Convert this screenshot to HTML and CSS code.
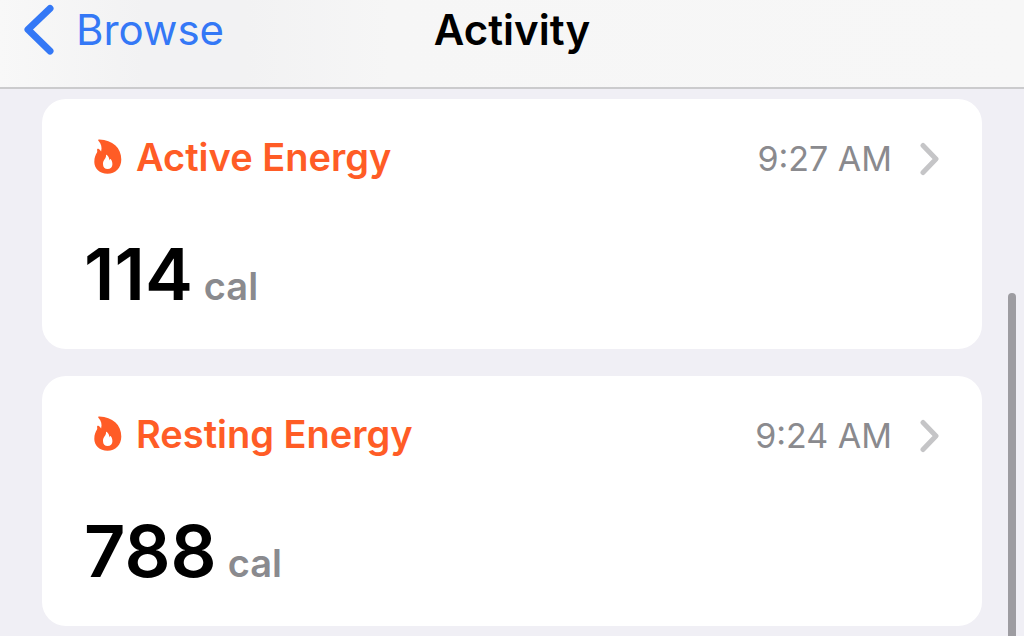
FILE: index.html
```html
<!DOCTYPE html>
<html lang="en">
<head>
<meta charset="utf-8">
<meta name="viewport" content="width=device-width, initial-scale=1">
<title>Activity</title>
<link rel="stylesheet" href="styles.css">
</head>
<body>
<svg class="symbols" aria-hidden="true">
  <symbol id="flame" viewBox="0 0 28 36">
    <path fill-rule="evenodd" d="M4.600 2C3.800 .9 4.200 .3 5.400 .4C18.500 .9 27.300 8.500 27.300 20.500C27.300 29 21.500 34.700 13.500 34.700C5.500 34.700 .3 29.500 .3 23C.3 18.500 1.600 16 3 13.600C3.400 12.800 3.200 12 3.100 11C3 9.800 3.900 9.400 4.800 10C5.700 10.600 6.400 11.400 7.100 12.400C8.200 8.500 7.200 5 4.600 2ZM12.800 16C12.200 15.600 11.900 15.900 12 16.600C12.300 19.500 9 21 9 25C9 28.200 10.800 30 13.600 30C16.500 30 18.400 28 18.400 25.200C18.400 23.200 17.900 21.400 16.800 20.200C16.300 19.700 15.900 19.900 15.800 20.400L15.500 21.500C15.300 19.200 14.400 17.200 12.800 16Z"/>
  </symbol>
  <symbol id="chevron" viewBox="0 0 20 34">
    <path d="M3 3.500L16 17L3 30.500"/>
  </symbol>
</svg>
<header class="navbar">
  <a class="back" href="#browse">
    <svg class="back-icon" viewBox="0 0 32 52" aria-hidden="true"><path d="M28 4.500L6 25.500L28 47"/></svg>
    <span>Browse</span>
  </a>
  <h1 class="title">Activity</h1>
</header>
<main class="cards">
  <a class="card" href="#active-energy">
    <div class="card-head">
      <svg class="flame" aria-hidden="true"><use href="#flame"/></svg>
      <h2 class="name">Active Energy</h2>
      <time class="time">9:27 AM</time>
      <svg class="chevron" aria-hidden="true"><use href="#chevron"/></svg>
    </div>
    <p class="reading"><span class="value">114</span><span class="unit">cal</span></p>
  </a>
  <a class="card" href="#resting-energy">
    <div class="card-head">
      <svg class="flame" aria-hidden="true"><use href="#flame"/></svg>
      <h2 class="name">Resting Energy</h2>
      <time class="time">9:24 AM</time>
      <svg class="chevron" aria-hidden="true"><use href="#chevron"/></svg>
    </div>
    <p class="reading"><span class="value">788</span><span class="unit">cal</span></p>
  </a>
</main>
<div class="scroll-thumb" aria-hidden="true"></div>
</body>
</html>
```
FILE: styles.css
```css
* {
  box-sizing: border-box;
}

body {
  margin: 0;
  background: #f0eff5;
  color: #000;
  font-family: Inter, "Liberation Sans", sans-serif;
}

a {
  color: inherit;
  text-decoration: none;
}

h1, h2, p {
  margin: 0;
}

.symbols {
  position: absolute;
  width: 0;
  height: 0;
}

.navbar {
  display: grid;
  grid-template-columns: 1fr auto 1fr;
  align-items: center;
  padding: 0 22px 27px;
  border-bottom: 2px solid #cbcbcd;
  background: linear-gradient(90deg, #f8f8f8 0%, #f2f2f3 14%, #f2f2f3 24%, #f6f6f6 38%, #f7f7f7 100%);
}

.back {
  display: flex;
  align-items: center;
  gap: 22px;
  color: #3478f6;
  font-size: 42px;
  line-height: 60px;
}

.back-icon {
  width: 32px;
  height: 52px;
  fill: none;
  stroke: currentColor;
  stroke-width: 7;
  stroke-linecap: round;
  stroke-linejoin: round;
}

.title {
  font-size: 42px;
  font-weight: 600;
  line-height: 60px;
}

.cards {
  display: grid;
  gap: 27px;
  padding: 10px 42px 9px;
}

.card {
  display: block;
  padding: 36px 42px 31px;
  border-radius: 24px;
  background: #fff;
}

.card-head {
  display: flex;
  align-items: flex-start;
  padding-left: 10px;
}

.flame {
  width: 28px;
  height: 36px;
  margin-top: 4px;
  margin-right: 14px;
  fill: #ff5c26;
}

.name {
  color: #ff5c26;
  font-size: 38px;
  font-weight: 600;
  line-height: 44px;
}

.time {
  margin-left: auto;
  color: #8a8a8e;
  font-size: 34px;
  line-height: 48px;
}

.chevron {
  width: 20px;
  height: 34px;
  margin-top: 7px;
  margin-left: 28px;
  fill: none;
  stroke: #c5c5c7;
  stroke-width: 5;
  stroke-linecap: round;
  stroke-linejoin: round;
}

.reading {
  display: flex;
  align-items: baseline;
  gap: 11px;
  margin-top: 47px;
}

.value {
  font-size: 72px;
  font-weight: 600;
  line-height: 88px;
}

.unit {
  color: #8a8a8e;
  font-size: 38px;
  font-weight: 600;
}

.scroll-thumb {
  position: fixed;
  top: 293px;
  right: 8px;
  bottom: 0;
  width: 8px;
  border-radius: 4px 4px 0 0;
  background: #9d9ca1;
}
```
